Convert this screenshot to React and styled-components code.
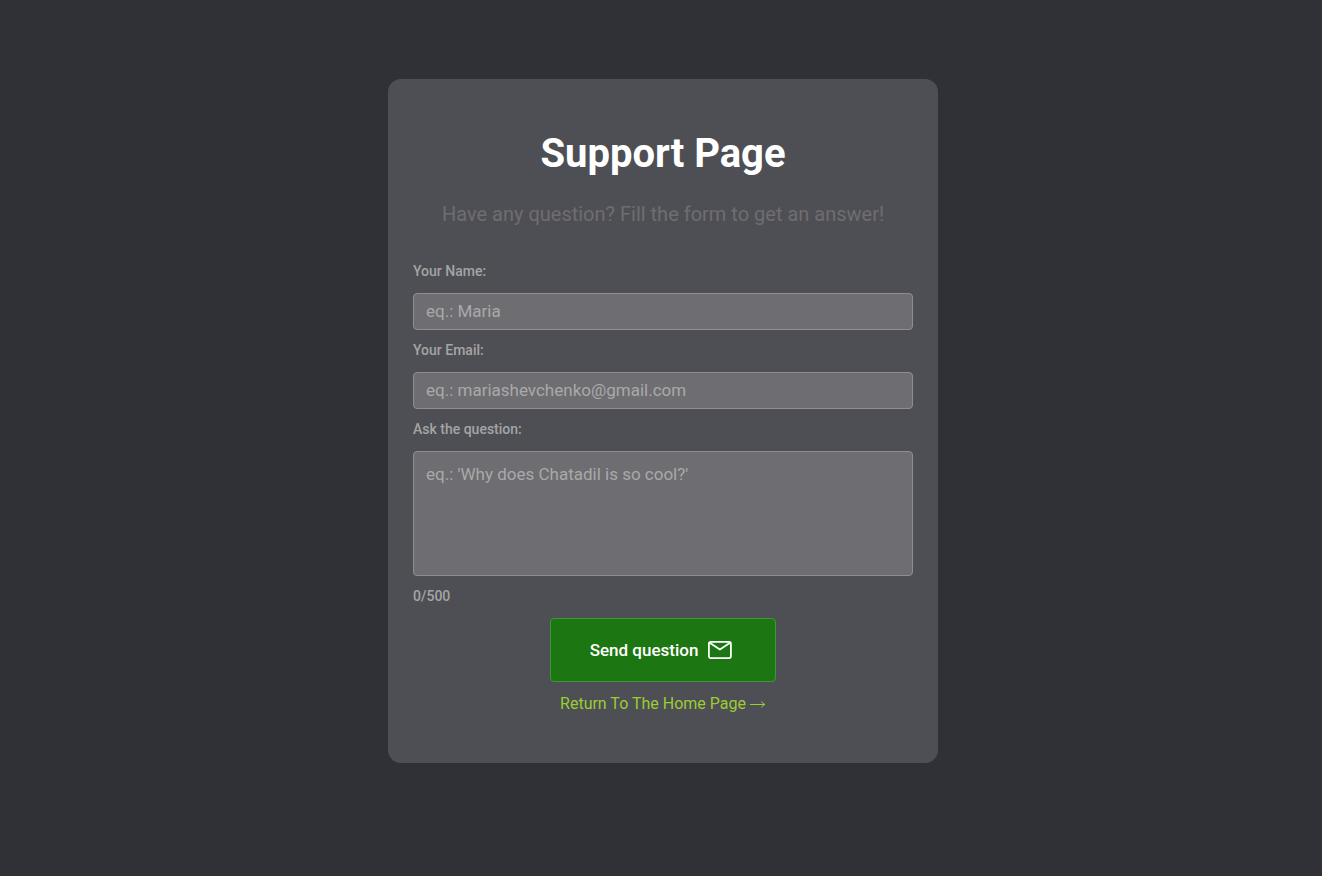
import React, { useState } from "react";
import styled, { createGlobalStyle, css } from "styled-components";

const GlobalStyle = createGlobalStyle`
  *, *::before, *::after { box-sizing: border-box; }
  body {
    margin: 0;
    background: #303136;
    font-family: Roboto, "Liberation Sans", sans-serif;
  }
`;

const Page = styled.main`
  display: flex;
  justify-content: center;
  align-items: flex-start;
  min-height: 100vh;
  padding: 79px 0 79px 4px;
`;

const Card = styled.section`
  width: 100%;
  max-width: 550px;
  padding: 50px 25px;
  border-radius: 13px;
  background: #4e4f54;
`;

const Title = styled.h1`
  margin: 0;
  color: #fff;
  font-size: 40px;
  font-weight: 700;
  line-height: 50px;
  text-align: center;
`;

const Subtitle = styled.p`
  margin: 22px 0 36px;
  color: #6e6d72;
  font-size: 20px;
  line-height: 26px;
  text-align: center;
`;

const Form = styled.form`
  display: flex;
  flex-direction: column;
`;

const Field = styled.div`
  display: flex;
  flex-direction: column;
  gap: 14px;
  margin-bottom: 12px;
`;

const captionText = css`
  color: #a4a4a6;
  font-size: 14px;
  font-weight: 500;
  line-height: 16px;
`;

const Label = styled.label`
  ${captionText}
`;

const Counter = styled.output`
  ${captionText}
  margin-bottom: 14px;
`;

const controlBox = css`
  width: 100%;
  border: 1px solid #8e8d91;
  border-radius: 4px;
  background: #6e6d72;
  color: #fff;
  font-family: inherit;
  font-size: 17px;
  line-height: 20px;
  &::placeholder { color: #a9a9a9; opacity: 1; }
`;

const TextInput = styled.input`
  ${controlBox}
  height: 37px;
  padding: 0 12px 2px;
`;

const TextArea = styled.textarea`
  ${controlBox}
  display: block;
  height: 125px;
  padding: 12px;
  resize: none;
`;

const SendButton = styled.button`
  display: flex;
  align-items: center;
  justify-content: center;
  gap: 10px;
  align-self: center;
  width: 226px;
  height: 64px;
  padding: 0 4px 0 0;
  border: 1px solid #3f963a;
  border-radius: 4px;
  background: #1c7612;
  color: #fff;
  font-family: inherit;
  font-size: 17px;
  font-weight: 500;
  cursor: pointer;
`;

const HomeLink = styled.a`
  align-self: center;
  display: flex;
  align-items: center;
  gap: 4px;
  margin-top: 12px;
  color: #9acd32;
  font-size: 16px;
  line-height: 19px;
  text-decoration: none;
`;

function MailIcon() {
  return (
    <svg width="24" height="18" viewBox="0 0 24 18" fill="none" stroke="currentColor" strokeWidth="1.8" strokeLinejoin="round" aria-hidden="true">
      <rect x="0.9" y="0.9" width="22" height="16.2" rx="1.8" />
      <path d="M1.3 1.5L11.9 8.5L22.5 1.5" />
    </svg>
  );
}

function ArrowIcon() {
  return (
    <svg width="16" height="9" viewBox="0 0 16 9" fill="none" stroke="currentColor" aria-hidden="true">
      <path d="M0 5.5H15M11.5 2.5Q12.5 4.8 15 5.5Q12.5 6.2 11.5 8.5" />
    </svg>
  );
}

const MAX_LENGTH = 500;

export default function App() {
  const [question, setQuestion] = useState("");

  return (
    <>
      <GlobalStyle />
      <Page>
        <Card>
          <Title>Support Page</Title>
          <Subtitle>Have any question? Fill the form to get an answer!</Subtitle>
          <Form onSubmit={(event) => event.preventDefault()}>
            <Field>
              <Label htmlFor="name">Your Name:</Label>
              <TextInput id="name" type="text" placeholder="eq.: Maria" />
            </Field>
            <Field>
              <Label htmlFor="email">Your Email:</Label>
              <TextInput id="email" type="email" placeholder="eq.: mariashevchenko@gmail.com" />
            </Field>
            <Field>
              <Label htmlFor="question">Ask the question:</Label>
              <TextArea
                id="question"
                maxLength={MAX_LENGTH}
                placeholder="eq.: 'Why does Chatadil is so cool?'"
                value={question}
                onChange={(event) => setQuestion(event.target.value)}
              />
            </Field>
            <Counter htmlFor="question">{`${question.length}/${MAX_LENGTH}`}</Counter>
            <SendButton type="submit">
              Send question
              <MailIcon />
            </SendButton>
            <HomeLink href="#home">
              Return To The Home Page
              <ArrowIcon />
            </HomeLink>
          </Form>
        </Card>
      </Page>
    </>
  );
}
